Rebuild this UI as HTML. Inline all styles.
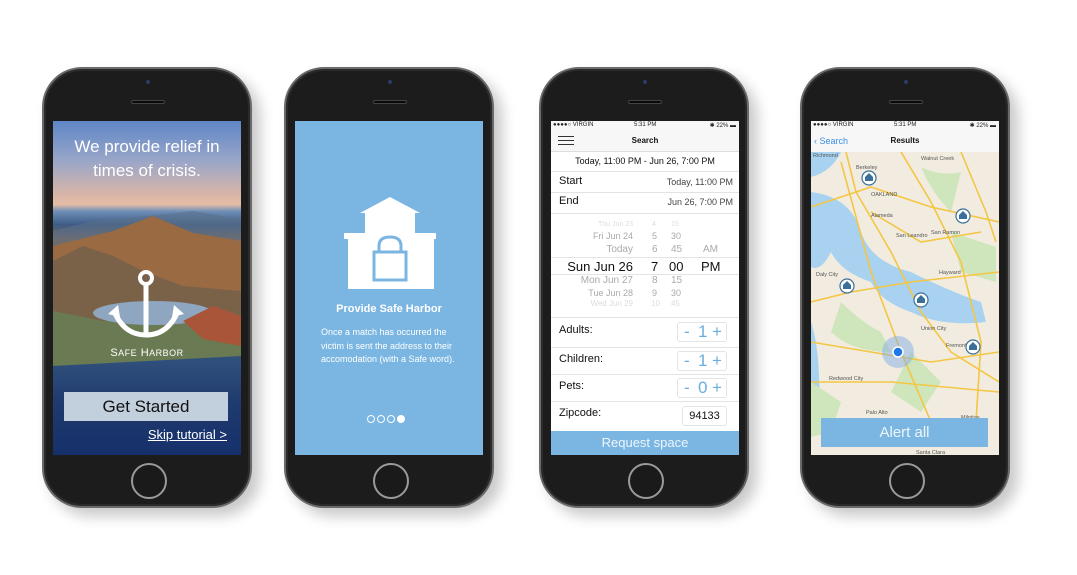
<!DOCTYPE html>
<html><head><meta charset="utf-8"><style>
*{margin:0;padding:0;box-sizing:border-box}
body{width:1077px;height:575px;background:#fff;position:relative;overflow:hidden;font-family:"Liberation Sans",sans-serif}
.ph{position:absolute;top:67px;width:210px;height:441px;border-radius:40px;background:#1c1c1c;border:2px solid #6a6a6a;box-shadow:8px 8px 14px rgba(0,0,0,.22),inset 0 0 0 2px #2a2a2a}
.ph .cam{position:absolute;top:11px;left:102px;width:4px;height:4px;border-radius:50%;background:#2a3c6a}
.ph .spk{position:absolute;top:31px;left:87px;width:34px;height:4px;border-radius:2px;background:#0a0a0a;border:1px solid #444}
.ph .home{position:absolute;top:394px;left:87px;width:36px;height:36px;border-radius:50%;border:2px solid #9a9a9a;background:#1a1a1a}
.sc{position:absolute;top:121px;width:188px;height:334px;overflow:hidden}
.sb{position:absolute;left:0;top:0;width:188px;height:9px;font-size:6px;color:#222;background:#f7f7f7}
.sb span{position:absolute;top:1px}
.nav{position:absolute;top:9px;left:0;width:188px;height:22px;background:#f7f7f7;border-bottom:1px solid #ddd;font-size:8px;font-weight:bold;text-align:center;line-height:22px;color:#111}
.row{position:absolute;left:0;width:188px;font-size:11px;color:#111}
.row .l{position:absolute;left:8px}
.row .r{position:absolute;right:6px;font-size:9px;color:#444}
.stp{position:absolute;right:12px;width:50px;height:20px;border:1px solid #e4e4e4;border-radius:3px;color:#6aaee0;font-size:17px;line-height:18px}
.stp b{position:absolute;font-weight:normal}
.hl{position:absolute;left:0;width:188px;height:1px;background:#e3e3e3}
.pk div{position:absolute}
</style></head><body>

<!-- Phone 1 -->
<div class="ph" style="left:42px"><div class="cam"></div><div class="spk"></div><div class="home"></div></div>
<div class="sc" style="left:53px;background:linear-gradient(#5e86c6 0%,#9aa6c8 12%,#d8b5a8 22%,#e6bda5 25%,#6f8fb8 27%,#3d5c86 31%,#8a6a4a 36%,#6b4c33 45%,#5a4a3a 55%,#3f5f80 62%,#2f4f7c 72%,#1f3a6e 85%,#16306a 100%)">
 <svg width="188" height="334" style="position:absolute;left:0;top:0">
  <polygon points="0,110 40,100 95,95 140,90 188,98 188,140 0,140" fill="#5c6f8a" opacity=".6"/>
  <polygon points="0,125 60,110 100,95 140,112 188,120 188,180 0,200" fill="#9a6b42"/>
  <polygon points="0,140 30,125 60,135 90,150 130,165 188,170 188,215 0,230" fill="#7a6248"/>
  <polygon points="0,190 50,200 120,195 188,200 188,235 0,245" fill="#6a7a52"/>
  <ellipse cx="100" cy="192" rx="60" ry="12" fill="#8fa6c0"/>
  <polygon points="130,200 160,185 188,195 188,225 150,218" fill="#a9553a"/>
 </svg>
 <div style="position:absolute;top:14px;width:188px;text-align:center;color:#fff;font-size:17px;line-height:24px">We provide relief in<br>times of crisis.</div>
 <svg width="80" height="74" style="position:absolute;left:53px;top:148px" viewBox="0 0 80 74">
  <circle cx="40" cy="9" r="6" fill="none" stroke="#fff" stroke-width="4"/>
  <path d="M40 15 V66 M8 42 Q18 66 40 66 Q62 66 72 42" fill="none" stroke="#fff" stroke-width="5"/>
  <path d="M2 45 L12 36 L14 48 Z M78 45 L68 36 L66 48 Z" fill="#fff"/>
 </svg>
 <div style="position:absolute;top:226px;width:188px;text-align:center;color:#fff;font-size:11px;letter-spacing:.5px">S<span style="font-size:9px">AFE</span> H<span style="font-size:9px">ARBOR</span></div>
 <div style="position:absolute;top:271px;left:11px;width:164px;height:29px;background:#c2cfdd;color:#111;font-size:17px;text-align:center;line-height:29px">Get Started</div>
 <div style="position:absolute;top:306px;right:14px;color:#fff;font-size:13px;text-decoration:underline">Skip tutorial &gt;</div>
</div>

<!-- Phone 2 -->
<div class="ph" style="left:284px"><div class="cam"></div><div class="spk"></div><div class="home"></div></div>
<div class="sc" style="left:295px;background:#7ab6e1">
 <svg width="188" height="110" style="position:absolute;left:0;top:74px">
  <polygon points="95,2 125,18 120,18 120,38 141,38 141,44 139,44 139,94 53,94 53,44 49,44 49,38 70,38 70,18 65,18" fill="#fff"/>
  <rect x="79" y="57" width="32" height="28" fill="none" stroke="#7ab6e1" stroke-width="3"/>
  <path d="M84 57 V51 Q84 42 95 42 Q106 42 106 51 V57" fill="none" stroke="#7ab6e1" stroke-width="3"/>
 </svg>
 <div style="position:absolute;top:182px;width:188px;text-align:center;color:#fff;font-weight:bold;font-size:11px">Provide Safe Harbor</div>
 <div style="position:absolute;top:205px;left:26px;width:150px;color:#fff;font-size:9px;line-height:13.5px">Once a match has occurred the victim is sent the address to their accomodation (with a Safe word).</div>
 <div style="position:absolute;top:294px;left:72px;display:flex;gap:2px">
  <i style="width:8px;height:8px;border:1px solid #fff;border-radius:50%"></i><i style="width:8px;height:8px;border:1px solid #fff;border-radius:50%"></i><i style="width:8px;height:8px;border:1px solid #fff;border-radius:50%"></i><i style="width:8px;height:8px;background:#fff;border-radius:50%"></i>
 </div>
</div>

<!-- Phone 3 -->
<div class="ph" style="left:539px"><div class="cam"></div><div class="spk"></div><div class="home"></div></div>
<div class="sc" style="left:551px;background:#fff">
 <div class="sb"><span style="left:2px">●●●●○ VIRGIN</span><span style="left:83px">5:31 PM</span><span style="right:3px">✱ 22% ▬</span></div>
 <div class="nav">Search<div style="position:absolute;left:7px;top:6px;width:16px;height:9px;border-top:1px solid #333;border-bottom:1px solid #333"><div style="margin-top:3px;height:1px;background:#333"></div></div></div>
 <div class="row" style="top:35px;text-align:center;font-size:9px">Today, 11:00 PM - Jun 26, 7:00 PM</div>
 <div class="hl" style="top:50px"></div>
 <div class="row" style="top:54px"><span class="l">Start</span><span class="r" style="top:2px">Today, 11:00 PM</span></div>
 <div class="hl" style="top:71px"></div>
 <div class="row" style="top:74px"><span class="l">End</span><span class="r" style="top:2px">Jun 26, 7:00 PM</span></div>
 <div class="hl" style="top:92px"></div>
 <div class="pk" style="position:absolute;top:100px;left:0;width:188px;font-size:9px;color:#aaa">
  <div style="top:0;right:106px;opacity:.4;font-size:7px">Thu Jun 23</div>
  <div style="top:10px;right:106px">Fri Jun 24</div>
  <div style="top:23px;right:106px;font-size:10px">Today</div>
  <div style="top:38px;right:106px;font-size:13px;color:#111">Sun Jun 26</div>
  <div style="top:54px;right:106px;font-size:10px">Mon Jun 27</div>
  <div style="top:67px;right:106px">Tue Jun 28</div>
  <div style="top:78px;right:106px;opacity:.4;font-size:8px">Wed Jun 29</div>
  <div style="top:0;left:101px;opacity:.4;font-size:7px">4</div>
  <div style="top:10px;left:101px">5</div>
  <div style="top:23px;left:101px;font-size:10px">6</div>
  <div style="top:38px;left:100px;font-size:13px;color:#111">7</div>
  <div style="top:54px;left:101px;font-size:10px">8</div>
  <div style="top:67px;left:101px">9</div>
  <div style="top:78px;left:100px;opacity:.4;font-size:8px">10</div>
  <div style="top:0;left:120px;opacity:.4;font-size:7px">15</div>
  <div style="top:10px;left:120px">30</div>
  <div style="top:23px;left:120px;font-size:10px">45</div>
  <div style="top:38px;left:118px;font-size:13px;color:#111">00</div>
  <div style="top:54px;left:120px;font-size:10px">15</div>
  <div style="top:67px;left:120px">30</div>
  <div style="top:78px;left:120px;opacity:.4;font-size:8px">45</div>
  <div style="top:23px;left:152px;font-size:10px">AM</div>
  <div style="top:38px;left:150px;font-size:13px;color:#111">PM</div>
 </div>
 <div class="hl" style="top:136px"></div><div class="hl" style="top:153px"></div>
 <div class="hl" style="top:196px"></div>
 <div class="row" style="top:203px"><span class="l">Adults:</span><div class="stp" style="top:-2px"><b style="left:6px">-</b><b style="left:20px">1</b><b style="left:34px">+</b></div></div>
 <div class="hl" style="top:226px"></div>
 <div class="row" style="top:232px"><span class="l">Children:</span><div class="stp" style="top:-2px"><b style="left:6px">-</b><b style="left:20px">1</b><b style="left:34px">+</b></div></div>
 <div class="hl" style="top:253px"></div>
 <div class="row" style="top:259px"><span class="l">Pets:</span><div class="stp" style="top:-2px"><b style="left:6px">-</b><b style="left:20px">0</b><b style="left:34px">+</b></div></div>
 <div class="hl" style="top:280px"></div>
 <div class="row" style="top:286px"><span class="l">Zipcode:</span><div style="position:absolute;right:12px;top:-1px;width:45px;height:20px;border:1px solid #e4e4e4;border-radius:3px;text-align:center;line-height:19px">94133</div></div>
 <div style="position:absolute;top:310px;left:0;width:188px;height:24px;background:#7ab6e1;color:#eef6fc;text-align:center;font-size:13px;line-height:24px">Request space</div>
</div>

<!-- Phone 4 -->
<div class="ph" style="left:800px"><div class="cam"></div><div class="spk"></div><div class="home"></div></div>
<div class="sc" style="left:811px;background:#f1ecdf">
 <svg width="188" height="304" style="position:absolute;left:0;top:31px">
  <path d="M0 40 Q40 45 50 80 Q60 110 100 120 Q140 140 170 150 L175 170 Q130 175 100 160 Q70 150 60 130 Q30 120 20 100 Q10 120 0 115 Z" fill="#a8d2ef"/>
  <path d="M0 0 H30 Q20 20 0 25 Z" fill="#a8d2ef"/>
  <path d="M0 170 Q10 200 8 260 L0 280 Z" fill="#a8d2ef"/>
  <path d="M30 150 Q50 170 70 180 L80 200 Q40 200 20 180 Z M110 15 Q130 25 150 20 L140 60 Q120 40 110 15 Z M140 80 L185 95 L185 130 L150 120 Z M100 200 L130 230 L110 260 L80 240 Z M0 230 L30 250 L20 280 L0 285 Z" fill="#cfe6bc"/>
  <g fill="none" stroke="#f4c644" stroke-width="1.6">
   <path d="M0 55 L60 35 L120 55 L188 70"/><path d="M35 0 L45 40 L80 100 L110 160 L140 200 L188 230"/>
   <path d="M30 10 L60 120 L90 200 L120 270"/><path d="M90 0 L120 50 L150 110 L170 190 L165 270"/>
   <path d="M0 150 L40 140 L100 130 L188 120"/><path d="M0 190 L60 200 L120 210 L188 200"/>
   <path d="M0 230 L80 230 L188 240"/><path d="M150 0 L175 60 L185 90"/><path d="M60 60 L110 90 L170 80"/>
  </g>
  <circle cx="87" cy="200" r="16" fill="#7aa9e6" opacity=".45"/><circle cx="87" cy="200" r="5" fill="#1e78e8" stroke="#fff" stroke-width="1.5"/>
  <g font-size="5.5" fill="#555" font-family="Liberation Sans">
   <text x="2" y="5">Richmond</text><text x="45" y="17">Berkeley</text><text x="110" y="8">Walnut Creek</text><text x="60" y="44">OAKLAND</text>
   <text x="60" y="65">Alameda</text><text x="85" y="85">San Leandro</text><text x="120" y="82">San Ramon</text><text x="128" y="122">Hayward</text>
   <text x="5" y="124">Daly City</text><text x="110" y="178">Union City</text><text x="135" y="195">Fremont</text><text x="18" y="228">Redwood City</text>
   <text x="55" y="262">Palo Alto</text><text x="60" y="286">Mountain View</text><text x="120" y="284">Sunnyvale</text><text x="150" y="267">Milpitas</text>
   <text x="105" y="302">Santa Clara</text>
  </g>
  <g fill="#fff" stroke="#3b6f99" stroke-width="1.2">
   <circle cx="58" cy="26" r="7"/><circle cx="152" cy="64" r="7"/><circle cx="36" cy="134" r="7"/><circle cx="110" cy="148" r="7"/><circle cx="162" cy="195" r="7"/>
  </g>
  <g fill="#3b6f99">
   <path d="M54 29 V25 L58 21 L62 25 V29 Z"/><path d="M148 67 V63 L152 59 L156 63 V67 Z"/><path d="M32 137 V133 L36 129 L40 133 V137 Z"/><path d="M106 151 V147 L110 143 L114 147 V151 Z"/><path d="M158 198 V194 L162 190 L166 194 V198 Z"/>
  </g>
 </svg>
 <div class="sb"><span style="left:2px">●●●●○ VIRGIN</span><span style="left:83px">5:31 PM</span><span style="right:3px">✱ 22% ▬</span></div>
 <div class="nav" style="border-bottom:none">Results<span style="position:absolute;left:3px;font-weight:normal;color:#3a8ee6;font-size:9px">&lsaquo; Search</span></div>
 <div style="position:absolute;top:297px;left:10px;width:167px;height:29px;background:#7ab6e1;color:#eef6fc;text-align:center;font-size:15px;line-height:29px">Alert all</div>
</div>
</body></html>
